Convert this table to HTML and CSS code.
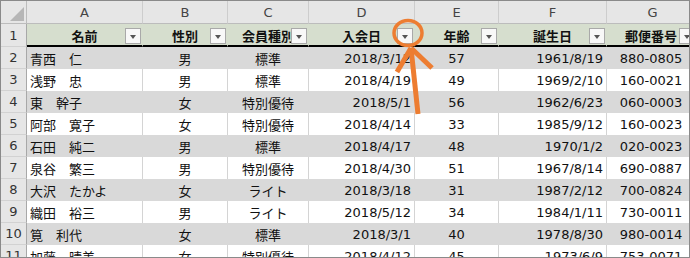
FILE: index.html
```html
<!DOCTYPE html>
<html lang="ja">
<head>
<meta charset="utf-8">
<link rel="stylesheet" href="styles.css">
</head>
<body>
<div class="sheet">
  <div class="row colhead">
    <div class="cell corner"><span class="tri"></span></div>
    <div class="cell">A</div><div class="cell">B</div><div class="cell">C</div><div class="cell">D</div><div class="cell">E</div><div class="cell">F</div><div class="cell">G</div>
  </div>
  <div class="row thead">
    <div class="cell rh">1</div>
    <div class="cell th">名前<span class="fbtn"></span></div>
    <div class="cell th">性別<span class="fbtn"></span></div>
    <div class="cell th">会員種別<span class="fbtn"></span></div>
    <div class="cell th">入会日<span class="fbtn"></span></div>
    <div class="cell th">年齢<span class="fbtn"></span></div>
    <div class="cell th">誕生日<span class="fbtn"></span></div>
    <div class="cell th g">郵便番号<span class="fbtn"></span></div>
  </div>
  <div class="row band"><div class="cell rh">2</div><div class="cell l">青西　仁</div><div class="cell c">男</div><div class="cell c">標準</div><div class="cell r">2018/3/12</div><div class="cell c">57</div><div class="cell r">1961/8/19</div><div class="cell c g">880-0805</div></div>
  <div class="row"><div class="cell rh">3</div><div class="cell l">浅野　忠</div><div class="cell c">男</div><div class="cell c">標準</div><div class="cell r">2018/4/19</div><div class="cell c">49</div><div class="cell r">1969/2/10</div><div class="cell c g">160-0021</div></div>
  <div class="row band"><div class="cell rh">4</div><div class="cell l">東　幹子</div><div class="cell c">女</div><div class="cell c">特別優待</div><div class="cell r">2018/5/1</div><div class="cell c">56</div><div class="cell r">1962/6/23</div><div class="cell c g">060-0003</div></div>
  <div class="row"><div class="cell rh">5</div><div class="cell l">阿部　寛子</div><div class="cell c">女</div><div class="cell c">特別優待</div><div class="cell r">2018/4/14</div><div class="cell c">33</div><div class="cell r">1985/9/12</div><div class="cell c g">160-0023</div></div>
  <div class="row band"><div class="cell rh">6</div><div class="cell l">石田　純二</div><div class="cell c">男</div><div class="cell c">標準</div><div class="cell r">2018/4/17</div><div class="cell c">48</div><div class="cell r">1970/1/2</div><div class="cell c g">020-0023</div></div>
  <div class="row"><div class="cell rh">7</div><div class="cell l">泉谷　繁三</div><div class="cell c">男</div><div class="cell c">特別優待</div><div class="cell r">2018/4/30</div><div class="cell c">51</div><div class="cell r">1967/8/14</div><div class="cell c g">690-0887</div></div>
  <div class="row band"><div class="cell rh">8</div><div class="cell l">大沢　たかよ</div><div class="cell c">女</div><div class="cell c">ライト</div><div class="cell r">2018/3/18</div><div class="cell c">31</div><div class="cell r">1987/2/12</div><div class="cell c g">700-0824</div></div>
  <div class="row"><div class="cell rh">9</div><div class="cell l">織田　裕三</div><div class="cell c">男</div><div class="cell c">ライト</div><div class="cell r">2018/5/12</div><div class="cell c">34</div><div class="cell r">1984/1/11</div><div class="cell c g">730-0011</div></div>
  <div class="row band"><div class="cell rh">10</div><div class="cell l">筧　利代</div><div class="cell c">女</div><div class="cell c">標準</div><div class="cell r">2018/3/1</div><div class="cell c">40</div><div class="cell r">1978/8/30</div><div class="cell c g">980-0014</div></div>
  <div class="row"><div class="cell rh">11</div><div class="cell l">加藤　晴美</div><div class="cell c">女</div><div class="cell c">特別優待</div><div class="cell r">2018/4/12</div><div class="cell c">45</div><div class="cell r">1973/6/9</div><div class="cell c g">753-0071</div></div>

  <svg class="mark" width="690" height="258" viewBox="0 0 690 258">
    <ellipse cx="408" cy="33" rx="14" ry="12.5" fill="none" stroke="#ed7d31" stroke-width="3.5"/>
    <g stroke="#ed7d31" stroke-width="5" fill="none" stroke-linecap="butt">
      <line x1="411" y1="48" x2="418" y2="114"/>
      <line x1="411" y1="48" x2="397" y2="72"/>
      <line x1="411" y1="48" x2="432" y2="68"/>
    </g>
  </svg>
</div>
</body>
</html>
```
FILE: styles.css
```css
body {
  margin: 0;
  background: #fff;
}
.sheet {
  position: relative;
  width: 690px;
  height: 258px;
  box-sizing: border-box;
  border: 1px solid #8a8a8a;
  overflow: hidden;
  font-family: "DejaVu Sans", "Noto Sans CJK JP", sans-serif;
  font-size: 13px;
  color: #111;
}
.row {
  display: grid;
  grid-template-columns: 26px 116px 85px 81px 106px 84px 108px 92px;
  height: 22px;
}
.cell {
  box-sizing: border-box;
  display: flex;
  align-items: center;
  padding: 0 3px;
  white-space: nowrap;
  overflow: hidden;
  border-right: 1px solid #d4d4d4;
  background: #fff;
}
.l { justify-content: flex-start; }
.c { justify-content: center; }
.r { justify-content: flex-end; }
.g { padding-right: 6px; }

.colhead { height: 23px; }
.colhead .cell {
  background: #e6e6e6;
  justify-content: center;
  color: #444;
  border-right-color: #cdcdcd;
  border-bottom: 1px solid #bcbcbc;
}
.colhead .corner {
  position: relative;
  border-right-color: #bcbcbc;
}
.tri {
  position: absolute;
  right: 2px;
  bottom: 2px;
  width: 0;
  height: 0;
  border-left: 14px solid transparent;
  border-bottom: 14px solid #b6b6b6;
}
.rh {
  background: #e6e6e6;
  justify-content: center;
  color: #333;
  border-right: 1px solid #a8a8a8;
  border-bottom: 1px solid #d2d2d2;
  padding: 0;
}
.band .cell {
  background: #d9d9d9;
  border-right-color: #d9d9d9;
}
.band .rh {
  background: #e6e6e6;
  border-right-color: #a8a8a8;
}
.thead { height: 23px; }
.th {
  position: relative;
  background: #d6dece;
  border-right-color: #d6dece;
  border-bottom: 2px solid #000;
  justify-content: center;
  font-weight: bold;
  color: #111;
  padding-top: 1px;
}
.fbtn {
  position: absolute;
  right: 1px;
  bottom: 1px;
  width: 16px;
  height: 16px;
  box-sizing: border-box;
  border: 1px solid #a9a9a9;
  background: #f8f8f8;
  display: flex;
  align-items: center;
  justify-content: center;
}
.fbtn::after {
  content: "";
  width: 0;
  height: 0;
  margin-top: 2px;
  border-left: 3.5px solid transparent;
  border-right: 3.5px solid transparent;
  border-top: 4px solid #555;
}
.th.g .fbtn { right: auto; left: 72px; }
.mark {
  position: absolute;
  top: -1px;
  left: -1px;
  pointer-events: none;
}
```
